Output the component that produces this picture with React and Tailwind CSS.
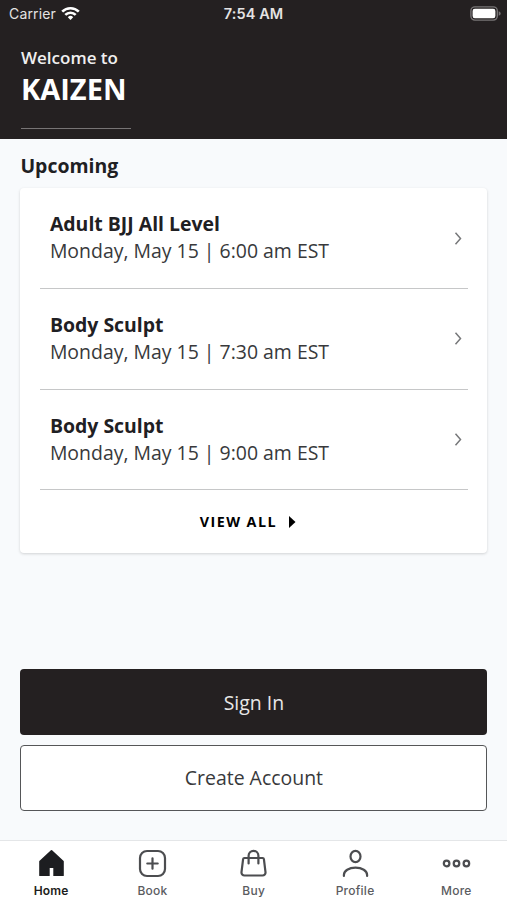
const classes = [
  { id: 1, name: "Adult BJJ All Level", time: "Monday, May 15 | 6:00 am EST" },
  { id: 2, name: "Body Sculpt", time: "Monday, May 15 | 7:30 am EST" },
  { id: 3, name: "Body Sculpt", time: "Monday, May 15 | 9:00 am EST" },
];

const tabs = [
  {
    name: "Home",
    icon: (
      <path
        d="M13.900 1.200 2.600 11.800a1 1 0 0 0-.4.800V26.500a.6.6 0 0 0 .6.600h9.900V19h3.600v8.100H26.200a.6.6 0 0 0 .6-.6V12.600a1 1 0 0 0-.4-.8L15.100 1.200a.9.9 0 0 0-1.200 0Z"
        fill="#1c1d20"
      />
    ),
  },
  {
    name: "Book",
    icon: (
      <>
        <rect x="2" y="2" width="25" height="25" rx="7" />
        <path d="M14.500 9.300v10.400M9.300 14.500h10.400" />
      </>
    ),
  },
  {
    name: "Buy",
    icon: (
      <>
        <path d="M5.400 9h18.200a1.300 1.300 0 0 1 1.300 1.100l1.600 13a3 3 0 0 1-3 3.400H5.500a3 3 0 0 1-3-3.400l1.600-13A1.300 1.300 0 0 1 5.400 9Z" />
        <path d="M9.600 14.500V6.700a4.900 4.900 0 0 1 9.800 0v7.800" />
      </>
    ),
  },
  {
    name: "Profile",
    icon: (
      <>
        <ellipse cx="14.500" cy="7.500" rx="5" ry="5.700" />
        <path d="M2.900 27v-1c0-4.200 5-7.300 11.600-7.300S26.100 21.800 26.100 26v1" />
      </>
    ),
  },
  {
    name: "More",
    icon: (
      <>
        <circle cx="4.600" cy="14.500" r="2.800" />
        <circle cx="14.500" cy="14.500" r="2.800" />
        <circle cx="24.400" cy="14.500" r="2.800" />
      </>
    ),
  },
];

function StatusBar() {
  return (
    <div className="grid h-[27px] grid-cols-3 items-center pl-[9px] pr-[6px] font-['Inter',sans-serif] text-[14px] text-[#e4e3e3]">
      <div className="flex items-center gap-[5px]">
        <span className="tracking-[0.150px]">Carrier</span>
        <svg width="19" height="15" viewBox="0 0 19 15" fill="none" stroke="#fff" strokeWidth="2.600">
          <path d="M1.200 5.700a11.700 11.700 0 0 1 16.600 0" />
          <path d="M4.300 8.900a7.300 7.300 0 0 1 10.400 0" />
          <path d="m9.500 14 2.700-2.800a3.800 3.800 0 0 0-5.400 0Z" fill="#fff" stroke="none" />
        </svg>
      </div>
      <span className="whitespace-nowrap pr-[3px] text-center text-[14.500px] font-semibold tracking-[0.100px]">
        7:54 AM
      </span>
      <svg className="justify-self-end" width="31" height="15" viewBox="0 0 31 15">
        <rect x="0.900" y="0.900" width="26.400" height="13.200" rx="4" fill="none" stroke="#777475" strokeWidth="1.400" />
        <rect x="2.600" y="2.800" width="22.800" height="9.400" rx="2.200" fill="#fff" />
        <path d="M28.700 5.200c1.400.6 2 1.400 2 2.300s-.6 1.700-2 2.300Z" fill="#777475" />
      </svg>
    </div>
  );
}

function ClassRow({ item }) {
  return (
    <li className="flex h-[100.600px] items-center justify-between border-b border-[#c6c7c8] pl-2.5 pr-[5px]">
      <div className="pb-[1.400px] text-[19.450px] leading-[27px]">
        <p className="font-bold text-[#1f2023]">{item.name}</p>
        <p className="text-[#38393b]">{item.time}</p>
      </div>
      <svg width="9" height="15" viewBox="0 0 9 15" fill="none" stroke="#77787a" strokeWidth="1.500">
        <path d="m1.500 1.800 5 5.700-5 5.700" />
      </svg>
    </li>
  );
}

export default function App() {
  return (
    <div className="flex h-[900px] w-[507px] flex-col overflow-hidden bg-[#f8fafc] font-['Open_Sans',sans-serif]">
      <header className="h-[139px] bg-[#242021] text-white">
        <StatusBar />
        <div className="px-[21px] pt-[19.400px]">
          <p className="text-[17px] font-semibold leading-[23px] text-[#f0efef]">Welcome to</p>
          <h1 className="text-[29px] font-bold leading-[40px]">KAIZEN</h1>
          <div className="mt-[18.600px] h-px w-[110px] bg-[#777475]" />
        </div>
      </header>

      <main className="flex flex-1 flex-col pl-[20.400px] pr-[19.600px]">
        <h2 className="mt-[13px] text-[19.450px] font-bold leading-[27px] text-[#1f2023]">Upcoming</h2>
        <section className="mt-[9.400px] h-[365px] rounded bg-white px-[19.500px] shadow-[0_1px_3px_rgba(0,0,0,0.16)]">
          <ul>
            {classes.map((item) => (
              <ClassRow key={item.id} item={item} />
            ))}
          </ul>
          <button className="flex h-[63px] w-full items-center justify-center gap-3 pr-3 text-[14.300px] font-bold tracking-[1.450px] text-black">
            VIEW ALL
            <svg width="7" height="12" viewBox="0 0 7 12">
              <path d="M0 0v12l6.500-6Z" />
            </svg>
          </button>
        </section>

        <div className="mt-auto flex flex-col gap-[9.500px] pb-[29.200px] text-[19.450px]">
          <button className="h-[66px] rounded bg-[#242021] text-[#e8e7e7]">Sign In</button>
          <button className="h-[66px] rounded border-[1.500px] border-[#555658] bg-white text-[#38393b]">
            Create Account
          </button>
        </div>
      </main>

      <nav className="grid h-[60px] grid-cols-5 border-t border-[#e4e6e8] bg-white pl-[0.500px] font-['Inter',sans-serif]">
        {tabs.map((tab) => (
          <button
            key={tab.name}
            className={`flex flex-col items-center pt-[8px] text-[12px] leading-4 ${
              tab.name === "Home"
                ? "font-semibold tracking-[0.150px] text-[#1c1d20]"
                : "font-medium tracking-[0.250px] text-[#5b5c5f]"
            }`}
          >
            <svg
              width="29"
              height="29"
              viewBox="0 0 29 29"
              fill="none"
              stroke={tab.name === "Home" ? "none" : "#4c4d50"}
              strokeWidth="2.200"
              strokeLinecap="round"
              strokeLinejoin="round"
            >
              {tab.icon}
            </svg>
            <span className="mt-[5px]">{tab.name}</span>
          </button>
        ))}
      </nav>
    </div>
  );
}
